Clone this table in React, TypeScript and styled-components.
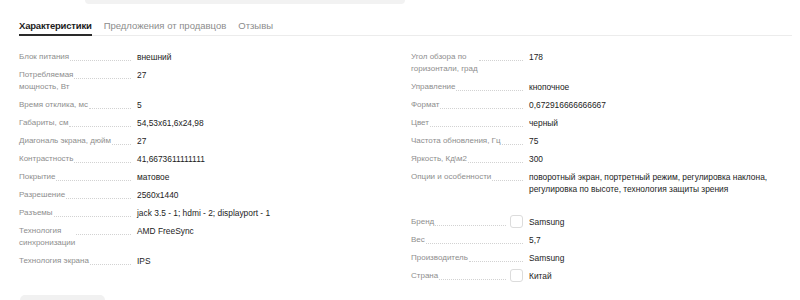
import React from 'react';
import styled, { createGlobalStyle } from 'styled-components';

const GlobalStyle = createGlobalStyle`
  body {
    margin: 0;
    background: #ffffff;
    font-family: "Liberation Sans", Arial, sans-serif;
  }
`;

const Page = styled.div`
  width: 800px;
  height: 300px;
  overflow: hidden;
  display: flex;
  flex-direction: column;
`;

const TopStrip = styled.div`
  width: 320px;
  height: 4px;
  margin-left: 85px;
  background: #f2f2f2;
  border-radius: 0 0 12px 12px;
`;

const Tabs = styled.div`
  display: flex;
  gap: 12px;
  margin: 15px 8px 0 19px;
  border-bottom: 1px solid #ececec;
`;

const Tab = styled.div<{ $active?: boolean }>`
  font-size: 9.5px;
  line-height: 14px;
  padding-bottom: 1px;
  letter-spacing: ${({ $active }) => ($active ? '-0.2px' : '0')};
  color: ${({ $active }) => ($active ? '#1c1c1c' : '#8c8c8c')};
  font-weight: ${({ $active }) => ($active ? 700 : 400)};
  border-bottom: 2px solid ${({ $active }) => ($active ? '#2a2a2a' : 'transparent')};
  margin-bottom: -1px;
`;

const Specs = styled.div`
  display: grid;
  grid-template-columns: 392px 1fr;
  padding: 0 8px 0 19px;
  margin-top: 15px;
`;

const Column = styled.div`
  display: flex;
  flex-direction: column;
  gap: 6px;
`;

const Group = styled.div<{ $spaced?: boolean }>`
  display: flex;
  flex-direction: column;
  gap: 6px;
  margin-top: ${({ $spaced }) => ($spaced ? '15px' : '0')};
`;

const Row = styled.div`
  display: flex;
  gap: 6px;
  font-size: 8px;
  line-height: 12px;
`;

const Label = styled.div`
  width: 112px;
  flex: none;
  display: flex;
  align-items: flex-start;
  color: #8e8e8e;
`;

const LabelText = styled.span`
  white-space: pre-line;
`;

const Leader = styled.span`
  flex: 1;
  min-width: 8px;
  height: 9px;
  margin-left: 1px;
  border-bottom: 1px dotted #d2d2d2;
`;

const Check = styled.span`
  flex: none;
  width: 13px;
  height: 13px;
  margin: -1px 0 -1px 4px;
  box-sizing: border-box;
  border: 1px solid #dcdcdc;
  border-radius: 3px;
  background: #fff;
`;

const Value = styled.div`
  color: #1c1c1c;
  font-size: 8.4px;
  white-space: pre-line;
`;

const BottomButton = styled.div`
  width: 85px;
  height: 10px;
  margin: auto 0 -5px 20px;
  background: #f1f1f1;
  border-radius: 10px;
`;

type Spec = { label: string; value: string; check?: boolean };

const left: Spec[] = [
  { label: 'Блок питания', value: 'внешний' },
  { label: 'Потребляемая\nмощность, Вт', value: '27' },
  { label: 'Время отклика, мс', value: '5' },
  { label: 'Габариты, см', value: '54,53x61,6x24,98' },
  { label: 'Диагональ экрана, дюйм', value: '27' },
  { label: 'Контрастность', value: '41,6673611111111' },
  { label: 'Покрытие', value: 'матовое' },
  { label: 'Разрешение', value: '2560x1440' },
  { label: 'Разъемы', value: 'jack 3.5 - 1; hdmi - 2; displayport - 1' },
  { label: 'Технология\nсинхронизации', value: 'AMD FreeSync' },
  { label: 'Технология экрана', value: 'IPS' },
];

const rightMain: Spec[] = [
  { label: 'Угол обзора по\nгоризонтали, град', value: '178' },
  { label: 'Управление', value: 'кнопочное' },
  { label: 'Формат', value: '0,672916666666667' },
  { label: 'Цвет', value: 'черный' },
  { label: 'Частота обновления, Гц', value: '75' },
  { label: 'Яркость, Кд\\м2', value: '300' },
  {
    label: 'Опции и особенности',
    value:
      'поворотный экран, портретный режим, регулировка наклона,\nрегулировка по высоте, технология защиты зрения',
  },
];

const rightExtra: Spec[] = [
  { label: 'Бренд', value: 'Samsung', check: true },
  { label: 'Вес', value: '5,7' },
  { label: 'Производитель', value: 'Samsung' },
  { label: 'Страна', value: 'Китай', check: true },
];

const SpecRow: React.FC<{ spec: Spec }> = ({ spec }) => (
  <Row>
    <Label>
      <LabelText>{spec.label}</LabelText>
      <Leader />
      {spec.check && <Check />}
    </Label>
    <Value>{spec.value}</Value>
  </Row>
);

export default function App() {
  return (
    <Page>
      <GlobalStyle />
      <TopStrip />
      <Tabs>
        <Tab $active>Характеристики</Tab>
        <Tab>Предложения от продавцов</Tab>
        <Tab>Отзывы</Tab>
      </Tabs>
      <Specs>
        <Column>
          {left.map((s) => (
            <SpecRow key={s.label} spec={s} />
          ))}
        </Column>
        <Column>
          <Group>
            {rightMain.map((s) => (
              <SpecRow key={s.label} spec={s} />
            ))}
          </Group>
          <Group $spaced>
            {rightExtra.map((s) => (
              <SpecRow key={s.label} spec={s} />
            ))}
          </Group>
        </Column>
      </Specs>
      <BottomButton />
    </Page>
  );
}
